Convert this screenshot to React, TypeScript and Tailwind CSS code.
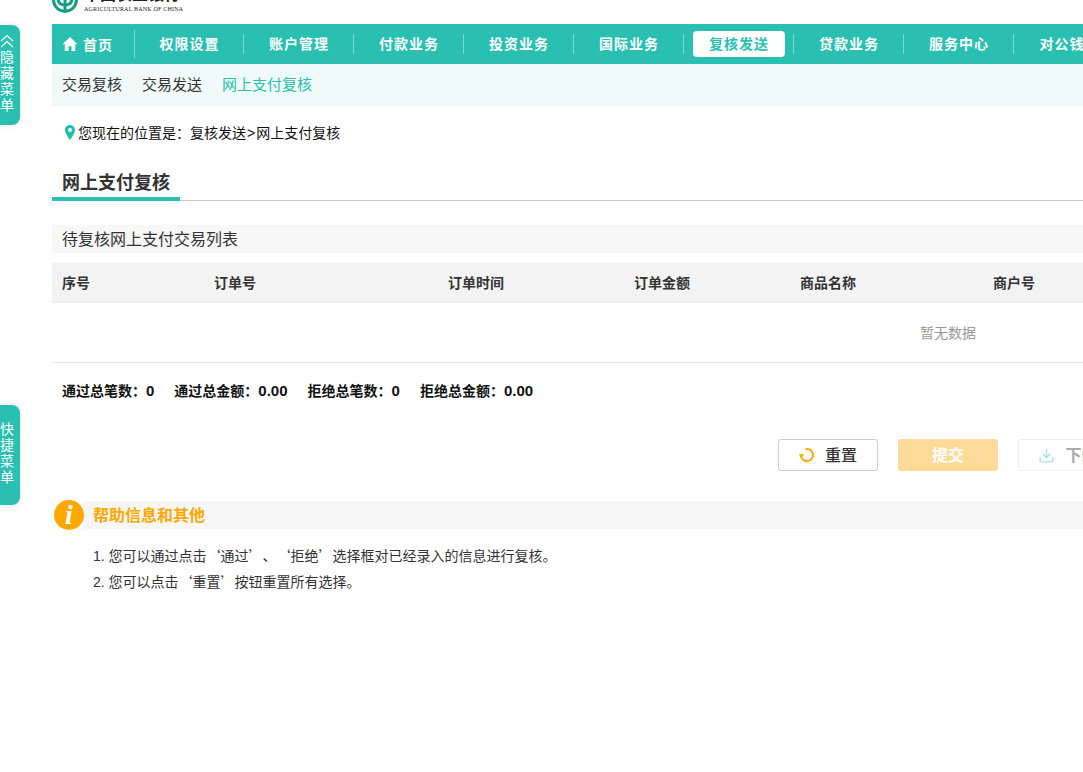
import React from "react";
import { Download } from "lucide-react";

const navItems = ["权限设置", "账户管理", "付款业务", "投资业务", "国际业务", "复核发送", "贷款业务", "服务中心", "对公钱包"];
const subItems = ["交易复核", "交易发送", "网上支付复核"];
const cols: [string, string][] = [
  ["序号", "w-[152px]"],
  ["订单号", "w-[234px]"],
  ["订单时间", "w-[186px]"],
  ["订单金额", "w-[166px]"],
  ["商品名称", "w-[193px]"],
  ["商户号", "w-[200px]"],
];
const totals: [string, string][] = [
  ["通过总笔数：", "0"],
  ["通过总金额：", "0.00"],
  ["拒绝总笔数：", "0"],
  ["拒绝总金额：", "0.00"],
];

function Cjk({ children }: { children: React.ReactNode }) {
  return <span className="font-['Noto_Sans_CJK_SC',sans-serif] leading-[20px]">{children}</span>;
}

function SideTab({ label, chevron, className }: { label: string; chevron?: boolean; className: string }) {
  return (
    <div className={`absolute left-0 w-[20px] h-[100px] bg-[#29bfb1] rounded-r-[8px] shadow-[0_0_6px_rgba(0,0,0,0.12)] flex flex-col items-center text-white text-[14px] leading-[16px] overflow-hidden ${chevron ? "pt-[9px]" : "pt-[16px]"} ${className}`}>
      {chevron && (
        <svg viewBox="0 0 14 14" className="w-[14px] h-[14px] -ml-[6px] shrink-0 mb-[1px]" fill="none" stroke="white" strokeWidth="1.1">
          <path d="M1 7 L7 1.5 L13 7" />
          <path d="M1 13 L7 7.5 L13 13" />
        </svg>
      )}
      {label.split("").map((c, i) => (
        <span key={i} className="-ml-[6px]">{c}</span>
      ))}
    </div>
  );
}

function Logo() {
  return (
    <div className="h-[24px] overflow-hidden flex items-end">
      <svg viewBox="0 0 26 26" className="w-[26px] h-[26px] shrink-0 mb-[11px]">
        <circle cx="13" cy="13" r="11.4" fill="none" stroke="#129f85" strokeWidth="3" />
        <path d="M6 11 C6 17 10 18 13 18 C16 18 20 17 20 11" fill="none" stroke="#129f85" strokeWidth="3" />
        <rect x="11.5" y="8" width="3" height="16" fill="#129f85" />
      </svg>
      <div className="ml-[6px] mb-[11px] flex flex-col w-[100px]">
        <span className="text-[16px] leading-[16px] font-bold text-[#222] h-[4px] overflow-hidden flex items-end whitespace-nowrap">中国农业银行</span>
        <span className="text-[6px] leading-[8px] mt-[2px] text-[#222] font-['Liberation_Serif',serif] whitespace-nowrap tracking-[0.2px]">AGRICULTURAL BANK OF CHINA</span>
      </div>
    </div>
  );
}

export default function App() {
  return (
    <div className="relative w-full h-[772px] overflow-hidden bg-white text-[#333] font-['Liberation_Sans','Noto_Sans_CJK_SC',sans-serif]">
      <SideTab label="隐藏菜单" chevron className="top-[25px]" />
      <SideTab label="快捷菜单" className="top-[405px]" />

      <div className="ml-[52px] w-[1792px]">
        <Logo />

        <nav className="h-[40px] bg-[#29bfb1] flex items-center text-white text-[14px] font-bold tracking-[1px]">
          <div className="w-[83px] h-[28px] flex items-center pl-[10px] gap-[5px] border-r border-white/40">
            <svg viewBox="0 0 16 16" className="w-[16px] h-[16px] shrink-0" fill="white">
              <path d="M8 1 L0.5 8.2 H2.8 V15 H6.5 V10.2 H9.5 V15 H13.2 V8.2 H15.5 Z" />
            </svg>
            <span className="mt-[2px]">首页</span>
          </div>
          {navItems.map((n, i) => {
            const active = n === "复核发送";
            return (
              <div key={n} className={`${i === 0 ? "w-[109px]" : "w-[110px]"} h-[20px] shrink-0 flex items-center justify-center ${i < navItems.length - 1 ? "border-r border-white/40" : ""}`}>
                <span className={active ? "w-[92px] h-[26px] shrink-0 pl-[1px] pt-[1px] bg-white rounded-[4px] text-[#29bfb1] flex items-center justify-center" : "pl-[1px] pt-[1px]"}>{n}</span>
              </div>
            );
          })}
        </nav>

        <div className="h-[42px] bg-[#f0faf9] flex items-center pl-[10px] gap-[20px] text-[15px]">
          {subItems.map((s, i) => (
            <span key={s} className={i === 2 ? "text-[#29bfb1]" : "text-[#333]"}>{s}</span>
          ))}
        </div>

        <div className="h-[54px] pl-[13px] pt-[18px] flex items-start text-[14px] leading-[18px] text-[#111]">
          <svg viewBox="0 0 10 15" className="w-[10px] h-[15px] mr-[3px] shrink-0 mt-[1px]">
            <path fillRule="evenodd" fill="#1dbfae" d="M5 0 C2.2 0 0 2.2 0 5 C0 8.5 5 15 5 15 C5 15 10 8.5 10 5 C10 2.2 7.8 0 5 0 Z M5 3 A2 2 0 1 1 5 7 A2 2 0 1 1 5 3 Z" />
          </svg>
          <span>您现在的位置是：复核发送<span className="mx-[1px]">&gt;</span>网上支付复核</span>
        </div>

        <div className="h-[41px] border-b border-[#c8c8c8]">
          <div className="w-[128px] h-[41px] border-b-[4px] border-[#29bfb1] pl-[10px] pt-[10px] text-[18px] leading-[26px] font-bold text-[#333]">
            网上支付复核
          </div>
        </div>

        <div className="mt-[24px] h-[28px] bg-[#f7f7f7] pl-[10px] pt-[2px] flex items-center text-[16px] text-[#333]">
          待复核网上支付交易列表
        </div>

        <div className="mt-[10px] h-[40px] bg-[#f3f3f3] border-b border-[#eee] pl-[10px] pt-[2px] flex items-center text-[14px] font-bold text-[#333]">
          {cols.map(([c, w]) => (
            <div key={c} className={`${w} shrink-0`}>{c}</div>
          ))}
        </div>
        <div className="h-[60px] border-b border-[#e8e8e8] pt-[2px] flex items-center justify-center text-[14px] text-[#999]">
          暂无数据
        </div>

        <div className="h-[57px] pl-[10px] flex items-center gap-[20px] text-[14px] font-bold text-[#111]">
          {totals.map(([l, v]) => (
            <span key={l}>
              {l}
              <span className="text-[15px]">{v}</span>
            </span>
          ))}
        </div>

        <div className="mt-[19px] flex justify-center gap-[20px]">
          <button className="w-[100px] h-[32px] rounded-[3px] border border-[#ccc] bg-white flex items-center justify-center gap-[10px] text-[16px] font-medium text-[#333]">
            <svg viewBox="0 0 16 16" className="w-[16px] h-[16px] shrink-0" fill="none" stroke="#ffa800" strokeWidth="2">
              <path d="M6.5 2.2 A6 6 0 1 1 2 8.5" />
              <path d="M0.3 7.2 L2.2 10.8 L4.8 7.6 Z" fill="#ffa800" strokeWidth="0.5" />
            </svg>
            <span className="pt-[2px]">重置</span>
          </button>
          <button className="w-[100px] h-[32px] rounded-[3px] bg-[#ffdb99] pt-[2px] flex items-center justify-center text-[16px] font-bold text-white">
            提交
          </button>
          <button className="w-[100px] h-[32px] rounded-[3px] border border-[#eee] bg-white flex items-center justify-center gap-[10px] text-[16px] font-bold text-[#aaa]">
            <Download className="w-[17px] h-[17px] text-[#a9e5df]" strokeWidth={2} />
            <span className="pt-[2px]">下载</span>
          </button>
        </div>

        <div className="mt-[29px] relative h-[30px] flex items-center">
          <div className="absolute left-[31px] right-0 top-[1px] h-[28px] bg-[#f7f7f7]" />
          <div className="relative ml-[2px] w-[30px] h-[30px] rounded-full bg-[#ffa800] flex items-center justify-center text-white text-[28px] leading-[30px] italic font-bold font-['Liberation_Serif',serif]">
            i
          </div>
          <span className="relative ml-[9px] pt-[2px] text-[16px] font-bold text-[#ffa800]">帮助信息和其他</span>
        </div>

        <ol className="mt-[13px] pl-[41px] text-[14px] leading-[26px] text-[#333] [text-spacing-trim:space-all]">
          <li className="h-[26px]">1. 您可以通过点击<Cjk>‘</Cjk>通过<Cjk>’、‘</Cjk>拒绝<Cjk>’</Cjk>选择框对已经录入的信息进行复核。</li>
          <li className="h-[26px]">2. 您可以点击<Cjk>‘</Cjk>重置<Cjk>’</Cjk>按钮重置所有选择。</li>
        </ol>
      </div>
    </div>
  );
}
